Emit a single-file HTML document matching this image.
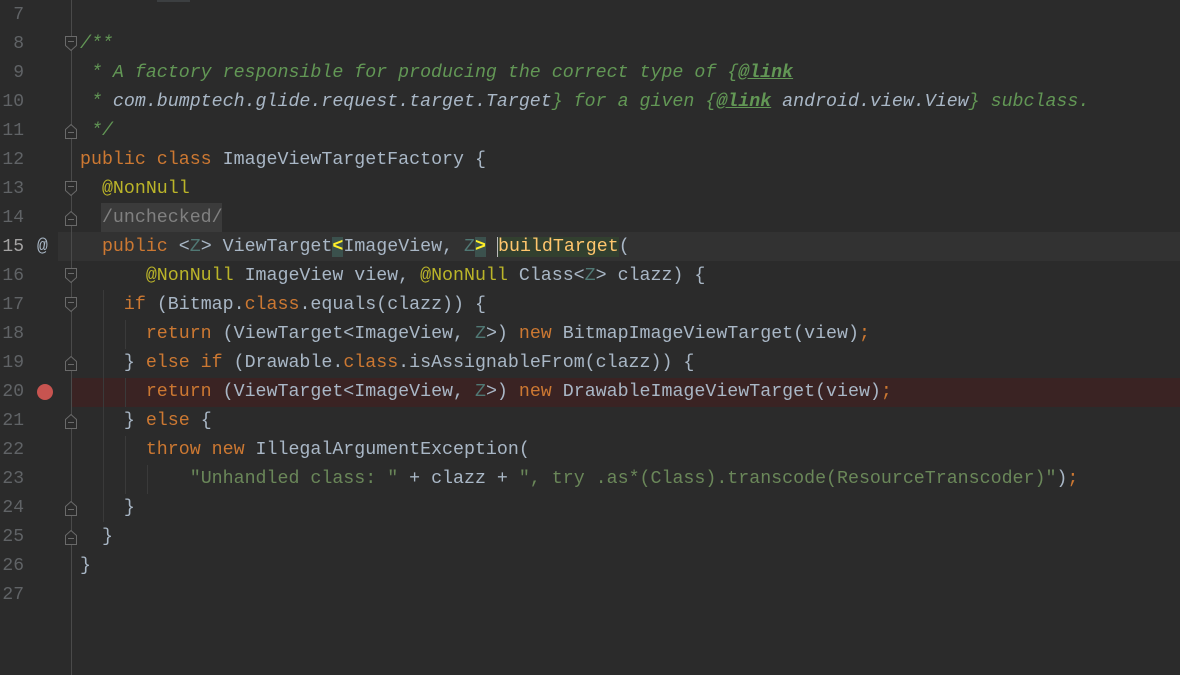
<!DOCTYPE html>
<html><head><meta charset="utf-8"><style>
html,body{margin:0;padding:0;background:#2b2b2b;width:1180px;height:675px;overflow:hidden;position:relative}
.l{position:absolute;left:80px;height:29px;line-height:29px;font-family:"Liberation Mono",monospace;font-size:18.3px;color:#a9b7c6;white-space:pre}
.n{position:absolute;width:24px;text-align:right;left:0;height:29px;line-height:29px;font-family:"Liberation Mono",monospace;font-size:18px;color:#606366}
.k{color:#cc7832}.a{color:#bbb529}.c{color:#629755;font-style:italic}.cl{color:#a9b7c6;font-style:italic}
.lk{color:#629755;font-style:italic;font-weight:bold;text-decoration:underline}
.s{color:#6a8759}.z{color:#507874}.f{color:#ffc66d}
.bm{background:#3b514d;color:#ffef28;font-weight:bold}
.hl{position:absolute;left:58px;right:0;height:29px}
.g{position:absolute;width:1px;background:#3a3a3a}
</style></head><body>
<div style="position:absolute;left:157px;top:0;width:33px;height:2px;background:#3c3f41"></div>
<div class="hl" style="top:232px;background:#323232"></div>
<div class="hl" style="top:378px;left:72px;background:#3a2323"></div>
<div style="position:absolute;left:71px;top:0;width:1px;height:675px;background:#4a4a4a"></div>
<div class="g" style="left:103px;top:290px;height:232px"></div>
<div class="g" style="left:125px;top:320px;height:29px"></div>
<div class="g" style="left:125px;top:378px;height:29px"></div>
<div class="g" style="left:125px;top:436px;height:58px"></div>
<div class="g" style="left:147px;top:465px;height:29px"></div>
<div style="position:absolute;left:101px;top:203px;width:121px;height:29px;background:#3b3b3b"></div>
<svg width="80" height="675" style="position:absolute;left:0;top:0">
<g fill="#2b2b2b" stroke="#6a6a6a" stroke-width="1">
<path d="M65.5 36.5h11v9l-5.5 5l-5.5-5z"/><path d="M68 41.5h6"/>
<path d="M65.5 138.5h11v-9l-5.5-5l-5.5 5z"/><path d="M68 132.5h6"/>
<path d="M65.5 181.5h11v9l-5.5 5l-5.5-5z"/><path d="M68 186.5h6"/>
<path d="M65.5 225.5h11v-9l-5.5-5l-5.5 5z"/><path d="M68 219.5h6"/>
<path d="M65.5 268.5h11v9l-5.5 5l-5.5-5z"/><path d="M68 273.5h6"/>
<path d="M65.5 297.5h11v9l-5.5 5l-5.5-5z"/><path d="M68 302.5h6"/>
<path d="M65.5 370.5h11v-9l-5.5-5l-5.5 5z"/><path d="M68 364.5h6"/>
<path d="M65.5 428.5h11v-9l-5.5-5l-5.5 5z"/><path d="M68 422.5h6"/>
<path d="M65.5 515.5h11v-9l-5.5-5l-5.5 5z"/><path d="M68 509.5h6"/>
<path d="M65.5 544.5h11v-9l-5.5-5l-5.5 5z"/><path d="M68 538.5h6"/>
</g>
<circle cx="45" cy="392" r="8" fill="#c75450"/>
</svg>
<div class="n" style="top:1px">7</div>
<div class="n" style="top:30px">8</div>
<div class="n" style="top:59px">9</div>
<div class="n" style="top:88px">10</div>
<div class="n" style="top:117px">11</div>
<div class="n" style="top:146px">12</div>
<div class="n" style="top:175px">13</div>
<div class="n" style="top:204px">14</div>
<div class="n" style="top:233px;color:#a4a3a3">15</div>
<div class="n" style="top:262px">16</div>
<div class="n" style="top:291px">17</div>
<div class="n" style="top:320px">18</div>
<div class="n" style="top:349px">19</div>
<div class="n" style="top:378px">20</div>
<div class="n" style="top:407px">21</div>
<div class="n" style="top:436px">22</div>
<div class="n" style="top:465px">23</div>
<div class="n" style="top:494px">24</div>
<div class="n" style="top:523px">25</div>
<div class="n" style="top:552px">26</div>
<div class="n" style="top:581px">27</div>
<div style="position:absolute;left:37px;top:233px;height:29px;line-height:29px;font-family:'Liberation Mono',monospace;font-size:18px;color:#a9b7c6">@</div>

<div class="l" style="top:30px"><span class="c">/**</span></div>
<div class="l" style="top:59px"><span class="c"> * A factory responsible for producing the correct type of {</span><span class="lk">@link</span></div>
<div class="l" style="top:88px"><span class="c"> * </span><span class="cl">com.bumptech.glide.request.target.Target</span><span class="c">} for a given {</span><span class="lk">@link</span><span class="c"> </span><span class="cl">android.view.View</span><span class="c">} subclass.</span></div>
<div class="l" style="top:117px"><span class="c"> */</span></div>
<div class="l" style="top:146px"><span class="k">public class </span>ImageViewTargetFactory {</div>
<div class="l" style="top:175px">  <span class="a">@NonNull</span></div>
<div class="l" style="top:204px;color:#808080">  /unchecked/</div>
<div class="l" style="top:233px">  <span class="k">public </span>&lt;<span class="z">Z</span>&gt; ViewTarget<span class="bm">&lt;</span>ImageView, <span class="z">Z</span><span class="bm">&gt;</span> <span class="f" style="border-left:1px solid #bbb;background:#32402f">buildTarget</span>(</div>
<div class="l" style="top:262px">      <span class="a">@NonNull</span> ImageView view, <span class="a">@NonNull</span> Class&lt;<span class="z">Z</span>&gt; clazz) {</div>
<div class="l" style="top:291px">    <span class="k">if </span>(Bitmap.<span class="k">class</span>.equals(clazz)) {</div>
<div class="l" style="top:320px">      <span class="k">return </span>(ViewTarget&lt;ImageView, <span class="z">Z</span>&gt;) <span class="k">new </span>BitmapImageViewTarget(view)<span class="k">;</span></div>
<div class="l" style="top:349px">    } <span class="k">else if </span>(Drawable.<span class="k">class</span>.isAssignableFrom(clazz)) {</div>
<div class="l" style="top:378px">      <span class="k">return </span>(ViewTarget&lt;ImageView, <span class="z">Z</span>&gt;) <span class="k">new </span>DrawableImageViewTarget(view)<span class="k">;</span></div>
<div class="l" style="top:407px">    } <span class="k">else </span>{</div>
<div class="l" style="top:436px">      <span class="k">throw new </span>IllegalArgumentException(</div>
<div class="l" style="top:465px">          <span class="s">"Unhandled class: "</span> + clazz + <span class="s">", try .as*(Class).transcode(ResourceTranscoder)"</span>)<span class="k">;</span></div>
<div class="l" style="top:494px">    }</div>
<div class="l" style="top:523px">  }</div>
<div class="l" style="top:552px">}</div>
</body></html>
